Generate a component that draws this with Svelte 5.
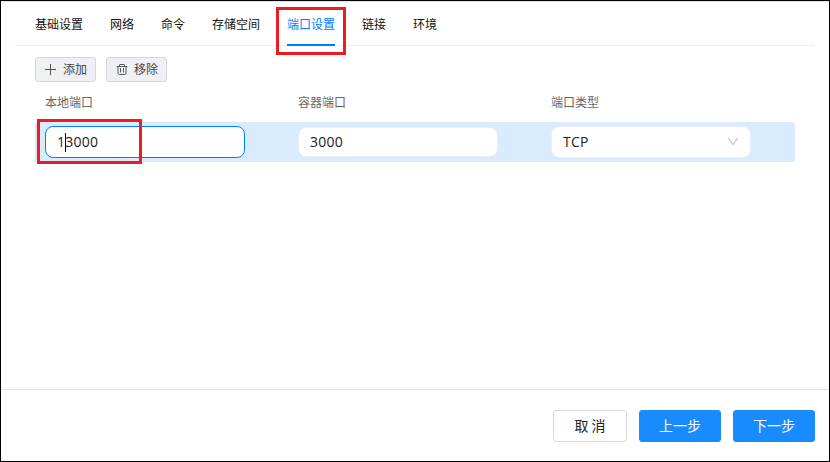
<script>
  const tabs = ['基础设置', '网络', '命令', '存储空间', '端口设置', '链接', '环境'];
  let active = $state('端口设置');
</script>

<div class="dialog">
  <nav class="tabs">
    {#each tabs as tab}
      <button class="tab" class:active={tab === active} onclick={() => (active = tab)}>
        {tab}
        {#if tab === '端口设置'}<span class="mark mark-tab"></span>{/if}
      </button>
    {/each}
  </nav>

  <main>
    <div class="toolbar">
      <button class="tool">
        <svg width="12" height="12" viewBox="0 0 12 12" fill="none" stroke="#555"><path d="M5.5 1v11M0 6.5h11" /></svg>
        <span>添加</span>
      </button>
      <button class="tool">
        <svg width="12" height="12" viewBox="0 0 12 12" fill="none" stroke="#555"><path d="M.7 3.5h10.6M3.5 3.5v-1.5q0-.5.5-.5h4q.5 0 .5.5v1.5M2 3.5v6.5q0 1.5 1.5 1.5h5q1.5 0 1.5-1.5v-6.5M4.5 5v4.5M7.5 5v4.5" /></svg>
        <span>移除</span>
      </button>
    </div>

    <div class="grid head">
      <span>本地端口</span><span>容器端口</span><span>端口类型</span>
    </div>
    <div class="grid row">
      <div class="field focused">1<i class="caret"></i>3000<span class="mark mark-field"></span></div>
      <div class="field short">3000</div>
      <div class="field select">
        <span>TCP</span>
        <svg width="12" height="12" viewBox="0 0 12 12" fill="none" stroke="#bdbdbd" stroke-width="1.1"><path d="M1.2 3L6 9.5L10.8 3" /></svg>
      </div>
    </div>
  </main>

  <footer>
    <button class="btn cancel">取 消</button>
    <button class="btn primary">上一步</button>
    <button class="btn primary">下一步</button>
  </footer>
</div>

<style>
  .dialog {
    box-sizing: border-box;
    width: 830px;
    height: 462px;
    border: 1px solid #000;
    box-shadow: inset 0 1px #e4e4e4;
    background: #fff;
    display: flex;
    flex-direction: column;
    font-family: 'Open Sans', 'Noto Sans', 'Noto Sans CJK SC', sans-serif;
    font-size: 12px;
    color: #111;
  }
  button {
    font: inherit;
    font-family: 'Noto Sans CJK SC', sans-serif;
    margin: 0;
    box-sizing: border-box;
    white-space: nowrap;
  }
  .tabs {
    box-sizing: border-box;
    display: flex;
    gap: 27px;
    height: 45px;
    margin: 0 14px;
    padding: 0 20px;
    border-bottom: 1px solid #ededed;
  }
  .tab {
    position: relative;
    height: 45px;
    padding: 3px 0 0;
    border: 0;
    border-bottom: 2px solid transparent;
    background: none;
    color: #111;
    line-height: 40px;
  }
  .tab.active {
    color: #007dfa;
    border-bottom-color: #007dfa;
  }
  .mark {
    position: absolute;
    box-sizing: border-box;
    border: 3px solid #ed1c24;
    pointer-events: none;
  }
  .mark-tab {
    left: -11px;
    top: 6px;
    width: 70px;
    height: 48px;
  }
  .mark-field {
    left: -9px;
    top: -8px;
    width: 105px;
    height: 45px;
  }
  main {
    flex: 1;
    padding: 11px 34px 0;
  }
  .toolbar {
    display: flex;
    gap: 10px;
  }
  .tool {
    display: flex;
    align-items: center;
    gap: 6px;
    width: 61px;
    height: 25px;
    padding: 0 0 1px 9px;
    border: 1px solid #d5d7db;
    border-radius: 3px;
    background: #eff0f4;
    color: #444;
    line-height: 22px;
  }
  .grid {
    display: grid;
    grid-template-columns: 253px 253px 1fr;
    box-sizing: border-box;
    width: 760px;
    padding: 0 10px;
  }
  .head {
    height: 40px;
    line-height: 40px;
    color: #666;
    font-family: 'Noto Sans CJK SC', sans-serif;
  }
  .row {
    height: 40px;
    align-items: center;
    border-radius: 3px;
    background: #d9ebff;
  }
  .field {
    position: relative;
    box-sizing: border-box;
    display: flex;
    align-items: center;
    width: 200px;
    height: 32px;
    padding: 0 11px 2px;
    border: 1px solid #ebeef2;
    border-radius: 8px;
    background: #fff;
    font-size: 14px;
    letter-spacing: 0.25px;
    color: #222;
  }
  .field.short {
    height: 30px;
  }
  .field.focused {
    border-color: #0080ff;
  }
  .caret {
    width: 1px;
    height: 19px;
    margin: 2px -1px 0 0;
    background: #000;
  }
  .select {
    justify-content: space-between;
  }
  footer {
    box-sizing: border-box;
    height: 72px;
    padding: 20px 14px 0;
    border-top: 1px solid #e5e5e5;
    display: flex;
    justify-content: flex-end;
    gap: 12px;
  }
  .btn {
    width: 82px;
    height: 32px;
    padding: 0 0 2px;
    border: 1px solid #188bff;
    border-radius: 3px;
    background: #188bff;
    color: #fff;
    font-size: 14px;
    line-height: 28px;
  }
  .cancel {
    width: 74px;
    border-color: #d9d9d9;
    background: #fff;
    color: #222;
  }
</style>
